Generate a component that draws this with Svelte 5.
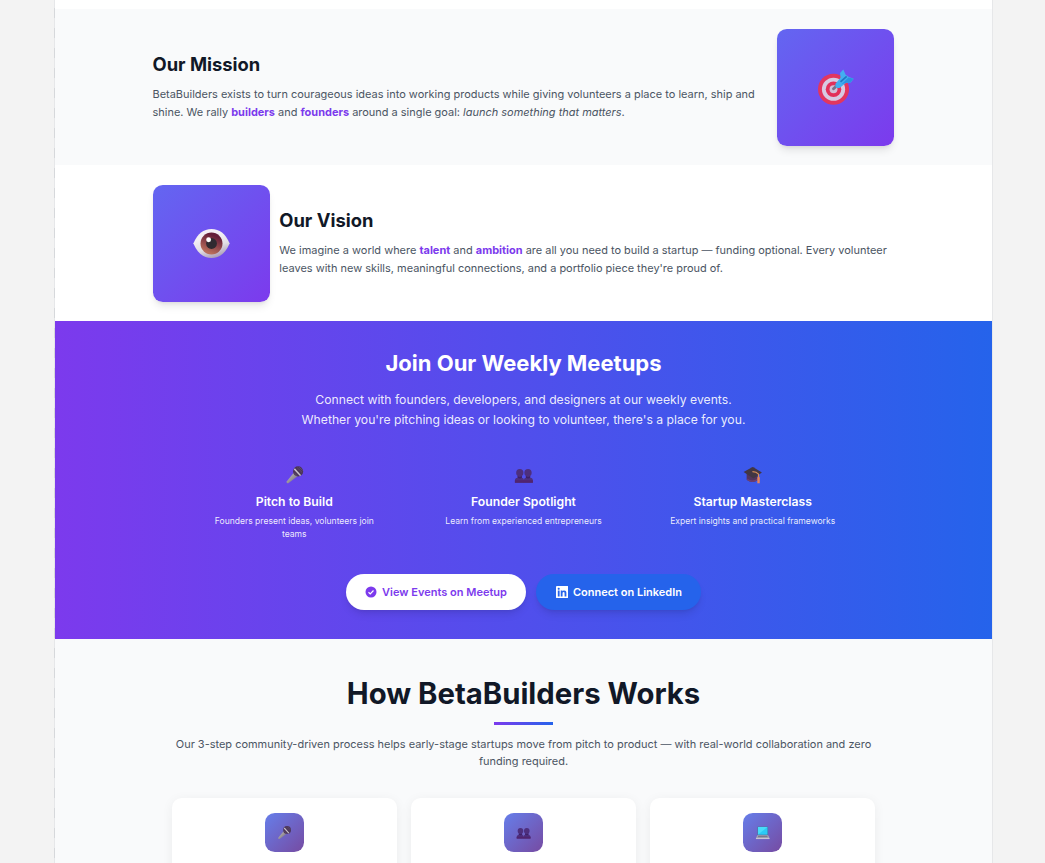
<script>
  const meetups = [
    { icon: 'mic', title: 'Pitch to Build', text: 'Founders present ideas, volunteers join teams' },
    { icon: 'people', title: 'Founder Spotlight', text: 'Learn from experienced entrepreneurs' },
    { icon: 'cap', title: 'Startup Masterclass', text: 'Expert insights and practical frameworks' }
  ];
  const steps = ['mic', 'people', 'laptop'];
</script>

{#snippet glyph(name, size)}
  <svg class="glyph" width={size} height={size} viewBox="0 0 32 32" aria-hidden="true">
    {#if name === 'mic'}
      <defs>
        <linearGradient id="micBody" x1="0" y1="0" x2="1" y2="1">
          <stop offset="0.2" stop-color="#b9b4b8" /><stop offset="0.8" stop-color="#7d777d" />
        </linearGradient>
      </defs>
      <path d="M15 12 21 18 6 29.5Q4.500 30.500 3.200 29.500 2 28.200 3 26.500Z" fill="url(#micBody)" />
      <circle cx="21.500" cy="10.500" r="8.300" fill="#4b3558" />
      <path d="M14.500 7.500 24.500 18 26.500 16.800 16.200 5.500Z" fill="#c9c3cc" />
      <path d="M20 4.500 28 12M23 3.500 29 9M15 12.500 20 18" stroke="#6e5a78" stroke-width="0.900" fill="none" />
    {:else if name === 'people'}
      <g fill="#4d2f7e">
        <path d="M1.500 29V25.500Q1.500 21.500 6 21V18Q3.500 16.500 3.500 13 3.500 6.500 9.500 6.500T15.500 13Q15.500 16.500 13 18V21Q16.500 21.500 16.500 25.500V29Z" />
        <path d="M16 29V25.500Q16 21.500 19.500 21V18Q17 16.500 17 13 17 6.500 23 6.500T29 13Q29 16.500 26.500 18V21Q31 21.500 31 25.500V29Z" />
      </g>
      <path d="M1.500 25H31V29H1.500Z" fill="#51246f" />
      <path d="M6 18Q9.500 21 13 18V21Q9.500 23 6 21ZM19.500 18Q23 21 26.500 18V21Q23 23 19.500 21Z" fill="#3d2167" />
    {:else if name === 'cap'}
      <path d="M6 14V24Q15 31 24 25V14Z" fill="#51345d" />
      <path d="M1 11.500 15 3.500Q16 3 17 3.500L31 12.500 19 21Q17.500 22 16 21.300Z" fill="#423643" />
      <path d="M7 22Q15 29 24 22V25Q16 31 7 25Z" fill="#6e3e72" />
      <path d="M15.500 11Q22 11 25.500 15V22" fill="none" stroke="#d88f57" stroke-width="2" />
      <path d="M23.500 20H27.500V30H23.500Z" fill="#e7835b" />
    {:else if name === 'laptop'}
      <rect x="5" y="3" width="23" height="19" rx="1.500" fill="#487ba6" />
      <rect x="6.500" y="4.500" width="20" height="16" fill="#2bc9f5" />
      <path d="M6.500 4.500H26.500L6.500 20.500Z" fill="#48dcfa" />
      <path d="M5 22H28L31 28H2Z" fill="#a8a9b6" />
      <path d="M7 23H26L27.500 26H5.500Z" fill="#77798c" />
      <path d="M2 28H31V30H2Z" fill="#d3d1db" />
    {:else if name === 'target'}
      <circle cx="13.800" cy="18" r="13.800" fill="#e2365f" />
      <circle cx="13.800" cy="18" r="10.300" fill="#d8cae2" />
      <circle cx="13.800" cy="18" r="6.900" fill="#e2305a" />
      <circle cx="13.800" cy="18" r="3.500" fill="#d3bfd7" />
      <path d="M13.800 17.500 18 13.500" stroke="#77728b" stroke-width="2.600" stroke-linecap="round" />
      <path d="M15.500 13 20 7.800 19.600 3.600 22.500 .4 24.600 5.200 27.500 7.200 31.800 8.600 29 12 25 12.300 19.500 16.600Q16.500 17.500 15.500 15.500Z" fill="#43aef0" />
      <path d="M21 13.500 27 7.500 31.500 8.700 28.800 11.900 25 12.300Z" fill="#2b92e2" />
      <path d="M20 11.500 25.500 6.500" stroke="#2076c6" stroke-width="1.500" />
    {:else if name === 'eye'}
      <defs>
        <linearGradient id="eyeWhite" x1="0.2" y1="0" x2="0.6" y2="1">
          <stop offset="0.3" stop-color="#f3eff5" /><stop offset="0.65" stop-color="#e2dfe5" /><stop offset="1" stop-color="#a99bb7" />
        </linearGradient>
        <linearGradient id="eyeIris" x1="0.7" y1="0" x2="0.3" y2="1">
          <stop offset="0.15" stop-color="#641d38" /><stop offset="0.9" stop-color="#b96e5c" />
        </linearGradient>
      </defs>
      <path d="M0.300 16C4 7.500 9 3.500 16 3.500S28 7.500 31.700 16C28 24.500 23 28.500 16 28.500S4 24.500 .3 16Z" fill="url(#eyeWhite)" />
      <circle cx="16" cy="16" r="9.500" fill="url(#eyeIris)" />
      <circle cx="16" cy="16" r="4.700" fill="#302a30" />
      <circle cx="13.500" cy="12.800" r="2.100" fill="#fff" />
    {/if}
  </svg>
{/snippet}

<div class="page">
  <div class="edge"></div>
  <main>
    <section class="band mission">
      <div class="row">
        <div class="copy">
          <h2>Our Mission</h2>
          <p>BetaBuilders exists to turn courageous ideas into working products while giving volunteers a place to learn, ship and shine. We rally <strong>builders</strong> and <strong>founders</strong> around a single goal: <em>launch something that matters</em>.</p>
        </div>
        <div class="tile">{@render glyph('target', 36)}</div>
      </div>
    </section>

    <section class="band vision">
      <div class="row">
        <div class="tile">{@render glyph('eye', 37)}</div>
        <div class="copy">
          <h2>Our Vision</h2>
          <p>We imagine a world where <strong>talent</strong> and <strong>ambition</strong> are all you need to build a startup — funding optional. Every volunteer leaves with new skills, meaningful connections, and a portfolio piece they're proud of.</p>
        </div>
      </div>
    </section>

    <section class="join">
      <h2>Join Our Weekly Meetups</h2>
      <p class="lead">Connect with founders, developers, and designers at our weekly events.<br />Whether you're pitching ideas or looking to volunteer, there's a place for you.</p>
      <div class="meetups">
        {#each meetups as item}
          <div class="meetup">
            {@render glyph(item.icon, 19.5)}
            <h3>{item.title}</h3>
            <p>{item.text}</p>
          </div>
        {/each}
      </div>
      <div class="actions">
        <button class="btn light">
          <svg width="12" height="12" viewBox="0 0 24 24" aria-hidden="true">
            <circle cx="12" cy="12" r="11" fill="currentColor" />
            <path d="M7 12.500 10.500 16 17 9" fill="none" stroke="#fff" stroke-width="2.300" />
          </svg>
          <span>View Events on Meetup</span>
        </button>
        <button class="btn blue">
          <svg width="12.200" height="12.200" viewBox="0 0 24 24" aria-hidden="true">
            <path fill="currentColor" d="M20.447 20.452h-3.554v-5.569c0-1.328-.027-3.037-1.852-3.037-1.853 0-2.136 1.445-2.136 2.939v5.667H9.351V9h3.414v1.561h.046c.477-.9 1.637-1.850 3.370-1.850 3.601 0 4.267 2.370 4.267 5.455v6.286zM5.337 7.433c-1.144 0-2.063-.926-2.063-2.065 0-1.138.92-2.063 2.063-2.063 1.140 0 2.064.925 2.064 2.063 0 1.139-.925 2.065-2.064 2.065zm1.782 13.019H3.555V9h3.564v11.452zM22.225 0H1.771C.792 0 0 .774 0 1.729v20.542C0 23.227.792 24 1.771 24h20.451C23.200 24 24 23.227 24 22.271V1.729C24 .774 23.200 0 22.222 0h.003z" />
          </svg>
          <span>Connect on LinkedIn</span>
        </button>
      </div>
    </section>

    <section class="how">
      <h1>How BetaBuilders Works</h1>
      <div class="rule"></div>
      <p>Our 3-step community-driven process helps early-stage startups move from pitch to product — with real-world collaboration and zero funding required.</p>
      <div class="cards">
        {#each steps as step}
          <article><div class="badge">{@render glyph(step, 15)}</div></article>
        {/each}
      </div>
    </section>
  </main>
</div>

<style>
  :global(body) { margin: 0; background: #f3f3f3; overflow: hidden; }
  .page {
    box-sizing: border-box;
    display: flex;
    height: 863px;
    padding: 0 52px 0 54px;
    overflow: hidden;
    font-family: Inter, sans-serif;
    color: #111827;
  }
  .edge {
    flex: none;
    width: 1px;
    background: repeating-linear-gradient(180deg, #e6e7e9 0 8px, #d6d8db 8px 18px, #e6e7e9 18px 20px);
  }
  main {
    box-sizing: border-box;
    flex: 1;
    height: 863px;
    padding-top: 9.300px;
    overflow: hidden;
    background: #fff;
    border-right: 1px solid #e6e7e9;
  }
  h1, h2, h3, p { margin: 0; }
  .glyph { display: block; flex: none; }

  .band { box-sizing: border-box; height: 156px; padding: 19.400px 98px 0 97.500px; }
  .mission { background: #f9fafb; }
  .row { display: flex; align-items: center; gap: 9.800px; }
  .copy { flex: 1; }
  .copy h2 { font-size: 18.360px; line-height: 22px; font-weight: 700; margin-bottom: 10px; }
  .copy p { font-size: 10.980px; line-height: 18px; color: #4b5563; }
  strong { font-weight: 700; color: #7c3aed; }
  .tile {
    flex: none;
    display: grid;
    place-items: center;
    width: 117px;
    height: 117px;
    border-radius: 9.800px;
    background: linear-gradient(135deg, #6366f1, #7c3aed);
    box-shadow: 0 6px 9px -2px rgb(0 0 0 / 0.1), 0 2px 4px -2px rgb(0 0 0 / 0.1);
  }
  .mission .tile { margin-left: -0.500px; }

  .join {
    box-sizing: border-box;
    height: 318.200px;
    padding-top: 29.300px;
    background: linear-gradient(90deg, #7c3aed, #2563eb);
    color: #fff;
    text-align: center;
  }
  .join h2 { font-size: 22px; line-height: 24.400px; font-weight: 700; }
  .lead { margin-top: 14.800px; font-size: 12.200px; line-height: 19.900px; color: rgb(255 255 255 / 0.9); }
  .meetups {
    display: grid;
    grid-template-columns: repeat(3, 1fr);
    gap: 14.600px;
    width: 673px;
    height: 108.700px;
    margin: 35.300px auto 0;
  }
  .meetup { padding: 0 24px; }
  .meetup .glyph { margin: 0 auto; }
  .meetup h3 { margin-top: 8.200px; font-size: 12.200px; line-height: 17px; font-weight: 600; }
  .meetup p { margin-top: 5.700px; font-size: 8.560px; line-height: 12.300px; color: rgb(255 255 255 / 0.9); }
  .actions { display: flex; justify-content: center; gap: 9.800px; }
  .btn {
    display: flex;
    align-items: center;
    gap: 5px;
    height: 36.600px;
    padding: 0 19.500px;
    border: 0;
    border-radius: 20px;
    font: 600 11px/17px Inter, sans-serif;
    box-shadow: 0 6px 9px -2px rgb(0 0 0 / 0.1), 0 2px 4px -2px rgb(0 0 0 / 0.1);
  }
  .btn span { padding-top: 1px; }
  .light { background: #fff; color: #7c3aed; }
  .blue { background: #2563eb; color: #fff; }

  .how { height: 260px; padding-top: 39.600px; background: #f9fafb; text-align: center; }
  .how h1 { font-size: 29.300px; line-height: 30px; font-weight: 700; }
  .rule { width: 58.600px; height: 2.400px; margin: 13.300px auto 0; background: linear-gradient(90deg, #7c3aed, #2563eb); }
  .how p { width: 703px; margin: 11.200px auto 0; font-size: 10.980px; line-height: 17.100px; color: #4b5563; }
  .cards { display: grid; grid-template-columns: repeat(3, 1fr); gap: 14.600px; width: 703px; margin: 27.700px auto 0; }
  article {
    height: 180px;
    padding-top: 15px;
    border-radius: 9.800px;
    background: #fff;
    box-shadow: 0 2px 12px rgb(0 0 0 / 0.06);
  }
  .badge {
    display: grid;
    place-items: center;
    width: 39px;
    height: 39px;
    margin: 0 auto;
    border-radius: 9.800px;
    background: linear-gradient(135deg, #667eea, #764ba2);
  }
</style>
